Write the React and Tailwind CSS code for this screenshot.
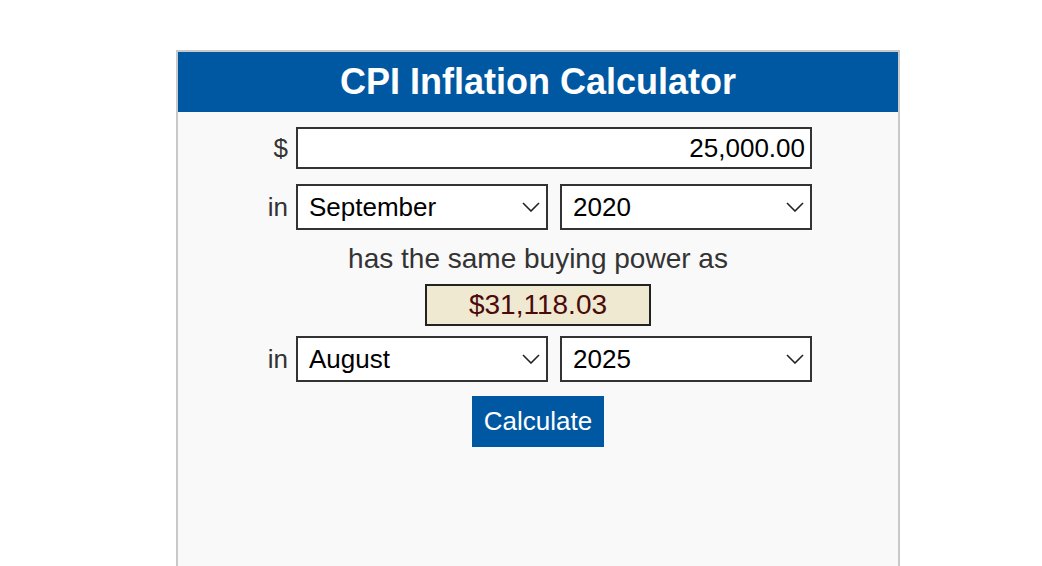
import { useState } from 'react';

const months = ['January', 'February', 'March', 'April', 'May', 'June', 'July', 'August', 'September', 'October', 'November', 'December'];
const years = Array.from({ length: 113 }, (_, i) => String(1913 + i));

function Chevron() {
  return (
    <svg className="pointer-events-none absolute right-[8px] top-1/2 -translate-y-1/2 w-[18px] h-[10px]" viewBox="0 0 18 10" fill="none">
      <path d="M1 1l8 8 8-8" stroke="#222" strokeWidth="1.6" />
    </svg>
  );
}

function Select({ value, onChange, options }) {
  return (
    <div className="relative w-[252px] h-[46px]">
      <select
        value={value}
        onChange={(e) => onChange(e.target.value)}
        className="appearance-none w-full h-full bg-white border-2 border-[#333] pl-[11px] pr-8 text-[26px] text-black outline-none"
      >
        {options.map((o) => (
          <option key={o} value={o}>{o}</option>
        ))}
      </select>
      <Chevron />
    </div>
  );
}

export default function App() {
  const [amount, setAmount] = useState('25,000.00');
  const [fromMonth, setFromMonth] = useState('September');
  const [fromYear, setFromYear] = useState('2020');
  const [toMonth, setToMonth] = useState('August');
  const [toYear, setToYear] = useState('2025');

  return (
    <div className="h-screen bg-white pt-[50px] font-['Liberation_Sans',Arial,sans-serif] overflow-hidden">
      <div className="ml-[176px] w-[724px] h-[540px] border-2 border-[#c9c9c9] bg-[#f9f9f9]">
        {/* Header */}
        <div className="h-[60px] bg-[#0058a2] flex items-center justify-center">
          <h1 className="text-white font-bold text-[36px] leading-none">CPI Inflation Calculator</h1>
        </div>

        <div className="flex flex-col items-center">
          {/* Amount */}
          <div className="mt-[15px] grid grid-cols-[24px_516px] gap-x-[8px] items-center">
            <span className="text-right text-[26px] text-[#333]">$</span>
            <input
              value={amount}
              onChange={(e) => setAmount(e.target.value)}
              className="h-[42px] w-full bg-white border-2 border-[#333] text-right pr-[5px] text-[26px] text-black outline-none"
            />
          </div>

          {/* From */}
          <div className="mt-[15px] grid grid-cols-[24px_516px] gap-x-[8px] items-center">
            <span className="text-right text-[26px] text-[#333]">in</span>
            <div className="flex gap-[12px]">
              <Select value={fromMonth} onChange={setFromMonth} options={months} />
              <Select value={fromYear} onChange={setFromYear} options={years} />
            </div>
          </div>

          <p className="mt-[13px] text-[28px] leading-[32px] text-[#333]">has the same buying power as</p>

          <div className="mt-[9px] w-[226px] h-[42px] border-2 border-[#222] bg-[#efe9d2] flex items-center justify-center text-[28px] text-[#4a0a0a]">
            $31,118.03
          </div>

          {/* To */}
          <div className="mt-[10px] grid grid-cols-[24px_516px] gap-x-[8px] items-center">
            <span className="text-right text-[26px] text-[#333]">in</span>
            <div className="flex gap-[12px]">
              <Select value={toMonth} onChange={setToMonth} options={months} />
              <Select value={toYear} onChange={setToYear} options={years} />
            </div>
          </div>

          <button className="mt-[14px] w-[132px] h-[51px] bg-[#0058a2] text-white text-[26px]">
            Calculate
          </button>
        </div>
      </div>
    </div>
  );
}
